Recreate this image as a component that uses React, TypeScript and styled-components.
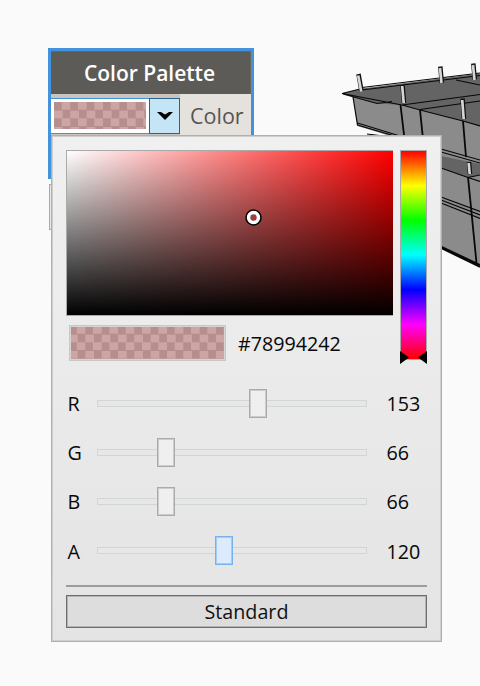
import React from 'react';
import styled, { createGlobalStyle } from 'styled-components';

const GlobalStyle = createGlobalStyle`
  *, *::before, *::after { box-sizing: border-box; }
  body { margin: 0; background: #fafafa; font-family: 'Open Sans', 'Noto Sans', sans-serif; }
`;

const Viewport = styled.main`
  position: relative;
  width: 480px;
  height: 686px;
  overflow: hidden;
  padding: 48px;
  background: #fafafa;
`;

const SceneSvg = styled.svg`
  position: absolute;
  top: 0;
  left: 0;
`;

const Node = styled.section`
  position: relative;
  width: 206px;
  height: 131px;
  border: 3px solid #4292dc;
  background: #c9c5be;
`;

const NodeHeader = styled.header`
  height: 43px;
  border-top: 1px solid #6b6459;
  border-right: 1px solid #6b6459;
  background: #5d5b58;
  color: #fff;
  font-size: 21px;
  font-weight: 600;
  line-height: 42px;
  text-align: center;
  padding-right: 2px;
`;

const NodeRow = styled.div`
  display: flex;
  height: 41px;
`;

const Combo = styled.div`
  display: flex;
  width: 129px;
  height: 36px;
  margin-top: 4px;
`;

const ComboField = styled.div`
  width: 98px;
  padding: 3px;
  border-top: 1px solid #4292dc;
  border-bottom: 1px solid #4292dc;
  background: #fff;
`;

const Checker = styled.div<{ $height: number; $x: number; $y: number }>`
  height: ${(p) => p.$height}px;
  background: repeating-conic-gradient(#cda5a5 0 25%, #b68e8e 0 50%) ${(p) => p.$x}px ${(p) => p.$y}px / 16.33px 16.33px;
`;

const DropButton = styled.button`
  display: flex;
  align-items: center;
  justify-content: center;
  width: 31px;
  height: 36px;
  padding: 0 0 1px;
  border: 1px solid #2c628b;
  background: #c4e5f6;
`;

const PortLabel = styled.div`
  flex: 1;
  padding-left: 10px;
  background: #e5e1dc;
  color: #555;
  font-size: 21.5px;
  line-height: 44px;
`;

const Port = styled.div`
  position: absolute;
  top: 184px;
  left: 49px;
  width: 10px;
  height: 46px;
  border: 1px solid #aaa;
  background: #e8e8e8;
`;

const Popup = styled.section`
  position: absolute;
  top: 135px;
  left: 51px;
  width: 391px;
  height: 507px;
  padding: 14px 14px 0;
  border: 1px solid #aeb0b2;
  box-shadow: inset 0 0 0 1px #cecece;
  background: linear-gradient(#f0f0f0, #e4e4e4);
  color: #080808;
  font-size: 20px;
`;

const PickerArea = styled.div`
  display: flex;
  justify-content: space-between;
  height: 215px;
`;

const MainColumn = styled.div`
  width: 327px;
`;

const Spectrum = styled.div`
  position: relative;
  height: 166px;
  border: 1px solid #aaa;
  border-right: 0;
  background: linear-gradient(to top, #000, transparent), linear-gradient(to right, #fff, #f00);
`;

const PickerMarker = styled.svg`
  position: absolute;
  left: 178px;
  top: 57.5px;
`;

const Preview = styled.div`
  display: flex;
  align-items: center;
  gap: 12px;
  padding: 9px 0 0 3px;
`;

const PreviewSwatch = styled.div`
  width: 157px;
  height: 36px;
  border: 1px solid #c5c8c6;
  padding: 1px;
  background: #d5d5d5;
`;

const HexValue = styled.span`
  padding-top: 2px;
  font-size: 19.7px;
  line-height: 34px;
`;

const HueColumn = styled.div`
  position: relative;
  width: 27px;
  height: 210px;
  border: 1px solid #aaa;
  background: linear-gradient(#f00, #ff0 16.67%, #0f0 33.33%, #0ff 50%, #00f 66.67%, #f0f 83.33%, #f00);
`;

const HueMarker = styled.svg`
  position: absolute;
  left: -1px;
  top: 200px;
`;

const Sliders = styled.div`
  display: flex;
  flex-direction: column;
  margin-top: 14px;
`;

const SliderRow = styled.div`
  display: grid;
  grid-template-columns: 31px 270px 1fr;
  align-items: center;
  height: 49px;
  font-size: 19.7px;

  &:last-child > span {
    padding-top: 2px;
  }
`;

const Channel = styled.span`
  padding-left: 1.5px;
  line-height: 28px;
`;

const ChannelValue = styled.span`
  padding-left: 19.5px;
  line-height: 28px;
`;

const Track = styled.div`
  display: flex;
  align-items: center;
  height: 7px;
  border: 1px solid #d3d5d3;
  background: #e5e8e7;
`;

const Thumb = styled.div<{ $active?: boolean }>`
  flex: none;
  width: 18px;
  height: 29px;
  border: 1px solid ${(p) => (p.$active ? '#78b1ef' : '#aaa')};
  box-shadow: inset 0 0 0 1px ${(p) => (p.$active ? '#a4cbf4' : '#ccc')};
  background: ${(p) => (p.$active ? '#dbebfc' : '#efefef')};
`;

const Divider = styled.hr`
  height: 2px;
  margin: 10px 0 8px;
  border: 0;
  background: #9c9e9c;
`;

const StandardButton = styled.button`
  display: block;
  width: 361px;
  height: 33px;
  padding: 0;
  border: 1px solid #6d6d6d;
  box-shadow: inset 0 0 0 1px #b4b4b4;
  background: #ddd;
  color: #111;
  font: 19.7px/31px 'Open Sans', 'Noto Sans', sans-serif;
`;

const channels = [
  { name: 'R', value: 153, offset: 151 },
  { name: 'G', value: 66, offset: 59 },
  { name: 'B', value: 66, offset: 59 },
  { name: 'A', value: 120, offset: 117, active: true },
];

function Scene() {
  return (
    <SceneSvg width="480" height="686" viewBox="0 0 480 686">
      <path d="M353 96 357.5 126 442 152V248L480 267V76L400 90Z" fill="#8b8b8b" />
      <path d="M342 93.5 362 88.5 480 73.5V127L463 121 402 105 377 103.5Z" fill="#646464" />
      <path d="M402 105 420 110 463 121 480 126V160L402 137Z" fill="#8b8b8b" />
      <path d="M402 105 480 94.5V101L420 109.5Z" fill="#646464" />
      <path d="M420 110 480 101V126L463 121Z" fill="#646464" />
      <path d="M441 156 480 164V175L468 177.5 441 168Z" fill="#646464" />
      <g fill="none" stroke="#080808" strokeWidth="1.2">
        <path d="M480 75.5 362 90M362 87.5 480 73M342 93.5 362 88.5M342 93.5 402 105 420 110 463 121 480 126M343 94 377 103.5 392 101.5M402 105 480 94.5M420 109.5 480 101M456 80 480 85" />
        <path d="M353 97 357.5 125 398 137M357.5 123 400 136M441 149 480 160M441 152 480 163M367 134 384 136" />
        <path d="M441 168 468 177.5 480 181.5M468 177.5 480 175M441 197 480 211.5M441 200 480 215M441 203 480 218.5" />
      </g>
      <g fill="none" stroke="#080808" strokeWidth="1.8">
        <path d="M400.5 105 404.5 139M420 110 423 139M463 121 466 157M468 177 476.5 263M441 248 480 267M441 246.5 480 265" />
      </g>
      <g fill="none" stroke="#111" strokeWidth="4.5">
        <path d="M358.5 74 361.5 91M402.5 85 404 103M440.3 66.5 441.8 83M473.3 63.5 474.8 79.5M462.5 98.5 464 119M469 162 470 174" />
      </g>
      <g fill="none" stroke="#d5d5d5" strokeWidth="2.7">
        <path d="M358.2 75.5 361.2 91.5M402.2 86 403.7 103M440 68 441.5 83M473 65 474.5 80M462.2 100 463.7 119M468.7 163 469.7 174" />
      </g>
    </SceneSvg>
  );
}

export default function App() {
  return (
    <Viewport>
      <GlobalStyle />
      <Scene />
      <Port />
      <Node>
        <NodeHeader>Color Palette</NodeHeader>
        <NodeRow>
          <Combo>
            <ComboField>
              <Checker $height={27} $x={0} $y={0} />
            </ComboField>
            <DropButton aria-label="Open color picker">
              <svg width="16" height="8" viewBox="0 0 16 8">
                <path d="M0 0H4L8 2.5 12 0H16L8 8Z" fill="#000" />
              </svg>
            </DropButton>
          </Combo>
          <PortLabel>Color</PortLabel>
        </NodeRow>
      </Node>
      <Popup>
        <PickerArea>
          <MainColumn>
            <Spectrum>
              <PickerMarker width="17" height="17" viewBox="0 0 17 17">
                <circle cx="8.5" cy="8.5" r="5.2" fill="none" stroke="#fff" strokeWidth="4" />
                <circle cx="8.5" cy="8.5" r="7.5" fill="none" stroke="#080808" strokeWidth="1.6" />
              </PickerMarker>
            </Spectrum>
            <Preview>
              <PreviewSwatch>
                <Checker $height={32} $x={-2} $y={-1} />
              </PreviewSwatch>
              <HexValue>#78994242</HexValue>
            </Preview>
          </MainColumn>
          <HueColumn>
            <HueMarker width="27" height="13" viewBox="0 0 27 13">
              <path d="M0 0 9 6.5 0 13ZM27 0 18 6.5 27 13Z" fill="#000" />
            </HueMarker>
          </HueColumn>
        </PickerArea>
        <Sliders>
          {channels.map((c) => (
            <SliderRow key={c.name}>
              <Channel>{c.name}</Channel>
              <Track>
                <Thumb $active={c.active} style={{ marginLeft: c.offset }} />
              </Track>
              <ChannelValue>{c.value}</ChannelValue>
            </SliderRow>
          ))}
        </Sliders>
        <Divider />
        <StandardButton>Standard</StandardButton>
      </Popup>
    </Viewport>
  );
}
